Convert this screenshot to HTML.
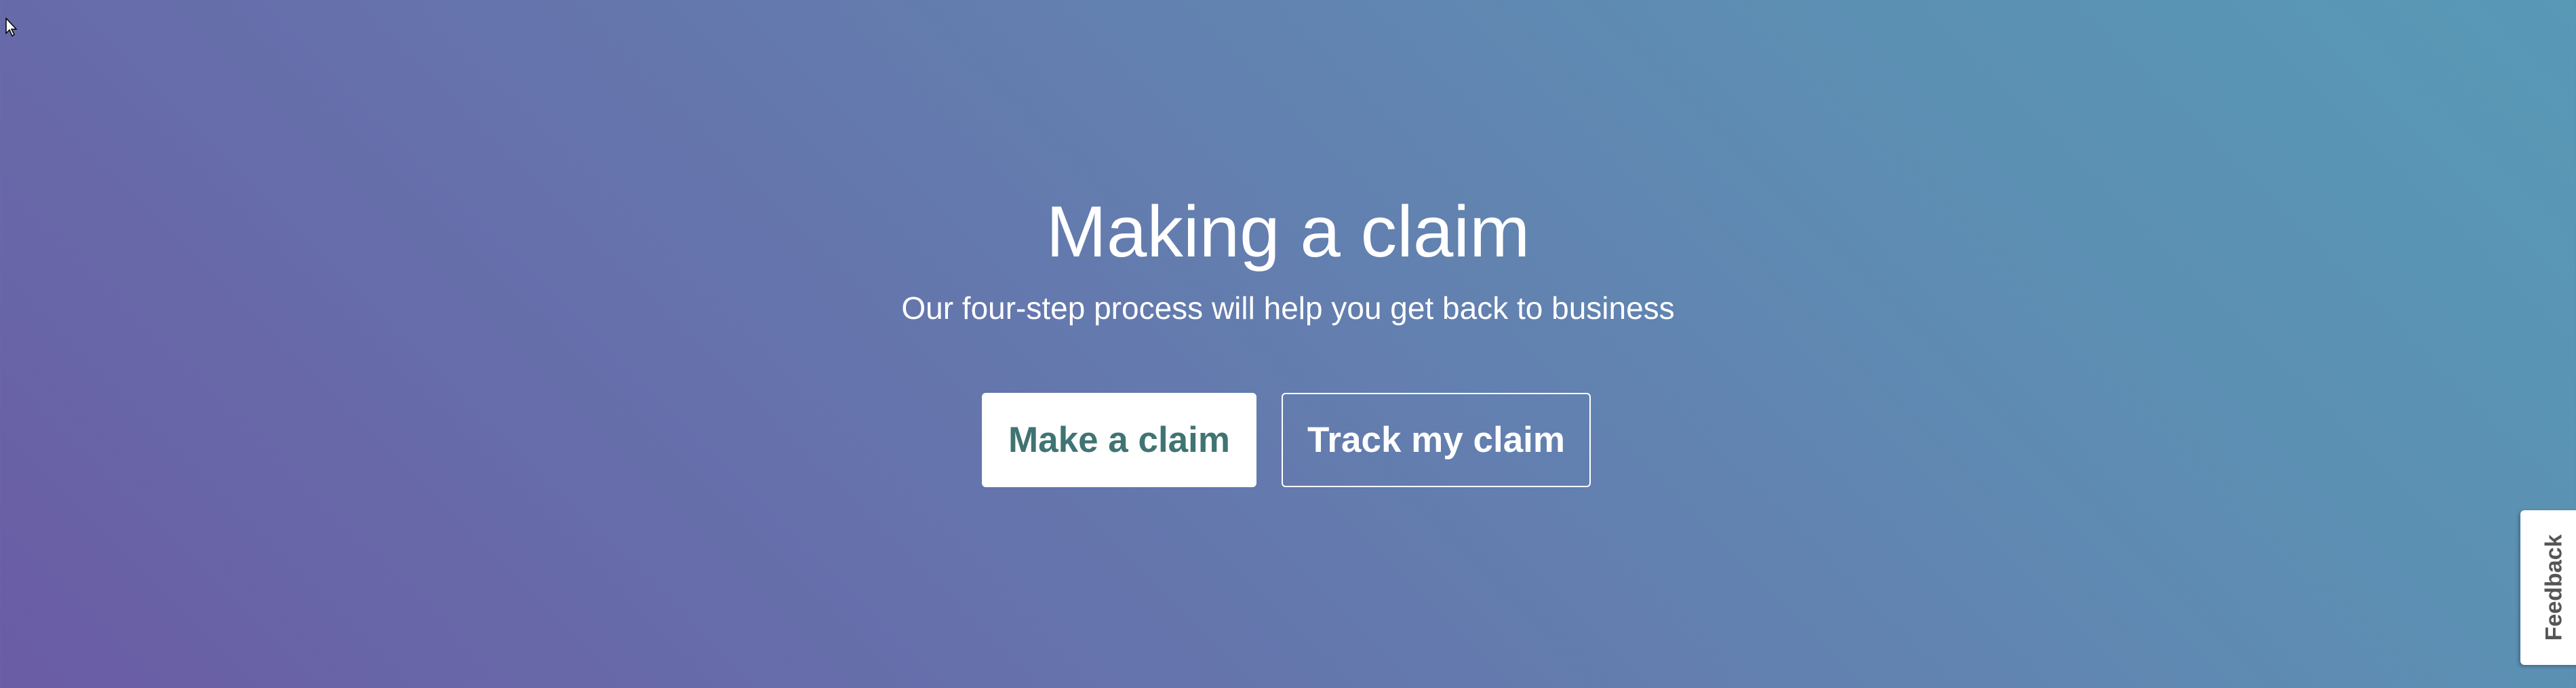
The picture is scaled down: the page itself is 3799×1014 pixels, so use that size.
<!DOCTYPE html>
<html><head><meta charset="utf-8"><style>
html,body{margin:0;padding:0}
body{width:3799px;height:1014px;overflow:hidden;position:relative;
background:linear-gradient(45deg,#6a5ca5 0%,#6670ab 30%,#6282b0 58%,#5c90b3 78%,#5899b6 100%);
font-family:"Liberation Sans",sans-serif;color:#fff}
.t{position:absolute;left:0;width:3799px;text-align:center}
h1{margin:0;font-weight:normal;font-size:107px;top:281px;line-height:120px}
.s{font-size:46px;top:427px;line-height:54px}
.b{position:absolute;top:579px;height:139px;box-sizing:border-box;border-radius:6px;
font-weight:bold;font-size:53px;line-height:139px;text-align:center}
.b1{left:1448px;width:405px;background:#fff;color:#3f7472}
.b2{left:1890px;width:456px;border:2px solid #fff;line-height:135px}
.fb{position:absolute;left:3717px;top:752px;width:100px;height:228px;background:#fff;border-radius:6px 0 0 6px;box-shadow:-2px 2px 6px rgba(0,0,0,.3)}
.fb span{position:absolute;left:50px;top:114px;transform:translate(-50%,-50%) rotate(-90deg);color:#555;font-size:34px;font-weight:bold;white-space:nowrap}
</style></head><body>
<svg style="position:absolute;left:8px;top:26px" width="20" height="28" viewBox="0 0 20 28"><path d="M1 1 L1 23 L6 18 L10 27 L13 25 L9 17 L16 17 Z" fill="#fff" stroke="#000" stroke-width="1.5"/></svg>
<h1 class="t">Making a claim</h1>
<div class="t s">Our four-step process will help you get back to business</div>
<div class="b b1">Make a claim</div>
<div class="b b2">Track my claim</div>
<div class="fb"><span>Feedback</span></div>
</body></html>
